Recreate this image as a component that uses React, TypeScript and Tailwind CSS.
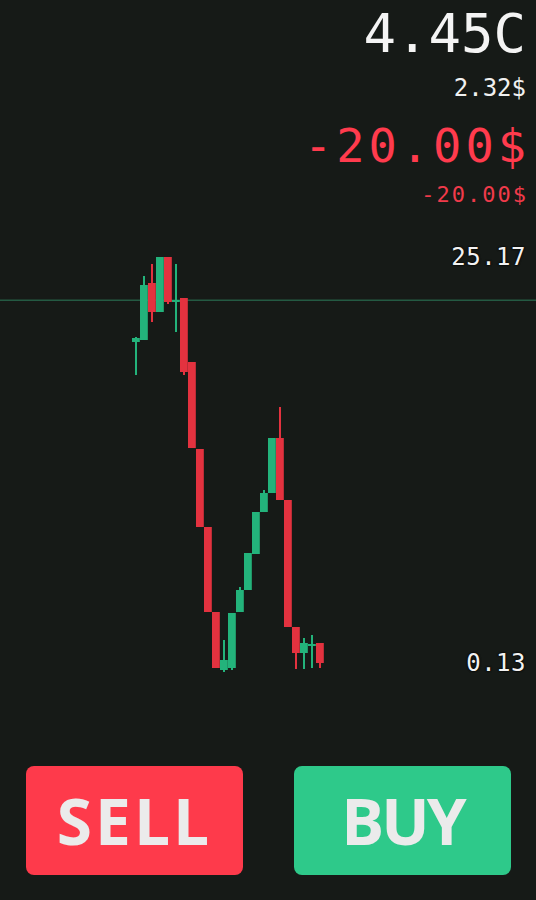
import React from 'react';

type Candle = { o: number; c: number; h: number; l: number };

// y values are page pixels, chart is drawn with a matching viewBox
const candles: Candle[] = [
  { o: 342, c: 338, h: 337, l: 375 },
  { o: 340, c: 285, h: 276, l: 340 },
  { o: 283, c: 312, h: 264, l: 322 },
  { o: 312, c: 257, h: 257, l: 312 },
  { o: 257, c: 302, h: 257, l: 304 },
  { o: 302, c: 300, h: 264, l: 332 },
  { o: 298, c: 372, h: 298, l: 375 },
  { o: 362, c: 448, h: 362, l: 448 },
  { o: 449, c: 527, h: 449, l: 527 },
  { o: 527, c: 612, h: 527, l: 612 },
  { o: 612, c: 668, h: 612, l: 668 },
  { o: 670, c: 660, h: 640, l: 672 },
  { o: 668, c: 613, h: 613, l: 670 },
  { o: 612, c: 590, h: 587, l: 612 },
  { o: 590, c: 553, h: 553, l: 590 },
  { o: 554, c: 512, h: 512, l: 554 },
  { o: 512, c: 493, h: 490, l: 512 },
  { o: 493, c: 438, h: 438, l: 493 },
  { o: 438, c: 500, h: 407, l: 500 },
  { o: 500, c: 627, h: 500, l: 627 },
  { o: 627, c: 653, h: 627, l: 669 },
  { o: 653, c: 643, h: 638, l: 669 },
  { o: 646, c: 644, h: 635, l: 668 },
  { o: 643, c: 663, h: 643, l: 668 },
];

const RED = '#e3323f';
const GREEN = '#23b37b';

function Chart() {
  return (
    <svg className="absolute inset-0 h-full w-full" viewBox="0 210 536 556" preserveAspectRatio="none">
      <rect x="0" y="299.5" width="536" height="1.5" fill="#245a43" />
      {candles.map((k, i) => {
        const x = 132 + i * 8;
        const up = k.c < k.o;
        const top = Math.min(k.o, k.c);
        const bottom = Math.max(k.o, k.c);
        const col = up ? GREEN : RED;
        return (
          <g key={i}>
            <rect x={x + 3} y={k.h} width="2" height={k.l - k.h} fill={col} />
            <rect x={x} y={top} width="7.8" height={Math.max(bottom - top, 2)} fill={col} />
          </g>
        );
      })}
    </svg>
  );
}

const mono = "font-['DejaVu_Sans_Mono',monospace]";

export default function App() {
  return (
    <div className="flex h-[900px] w-[536px] flex-col overflow-hidden bg-[#161a17]">
      <div className={`flex h-[210px] flex-col items-end pr-[10px] ${mono}`}>
        <div className="mt-[7px] text-[54px] leading-[54px] text-[#f4f4f4]">4.45C</div>
        <div className="mt-[15px] text-[24px] leading-[24px] text-[#f0f0f0]">2.32$</div>
        <div className="mt-[22px] text-[47px] leading-[47px] tracking-[4px] text-[#ff3b4d] -mr-[4px]">-20.00$</div>
        <div className="mt-[15px] text-[22px] leading-[22px] tracking-[2px] text-[#f03a4a] -mr-[2px]">-20.00$</div>
      </div>

      <div className="relative flex-1">
        <Chart />
        <div className={`absolute right-[10px] top-[35px] text-[24px] leading-[24px] tracking-[0.5px] text-[#f2f2f2] [text-shadow:0_0_2px_#000,0_0_2px_#000] ${mono}`}>
          25.17
        </div>
        <div className={`absolute right-[10px] top-[441px] text-[24px] leading-[24px] tracking-[0.5px] text-[#f2f2f2] [text-shadow:0_0_2px_#000,0_0_2px_#000] ${mono}`}>
          0.13
        </div>
      </div>

      <div className="flex h-[134px] justify-between pb-[25px] pl-[26px] pr-[25px]">
        <button className="flex h-[109px] w-[217px] items-center justify-center rounded-[8px] bg-[#fe3a4b] font-['Open_Sans',sans-serif] text-[64px] font-bold tracking-[3px] text-[#ebebeb]">
          SELL
        </button>
        <button className="flex h-[109px] w-[217px] items-center justify-center rounded-[8px] bg-[#2ec98a] font-['Open_Sans',sans-serif] text-[64px] font-bold tracking-[-3px] text-[#ebebeb]">
          BUY
        </button>
      </div>
    </div>
  );
}
